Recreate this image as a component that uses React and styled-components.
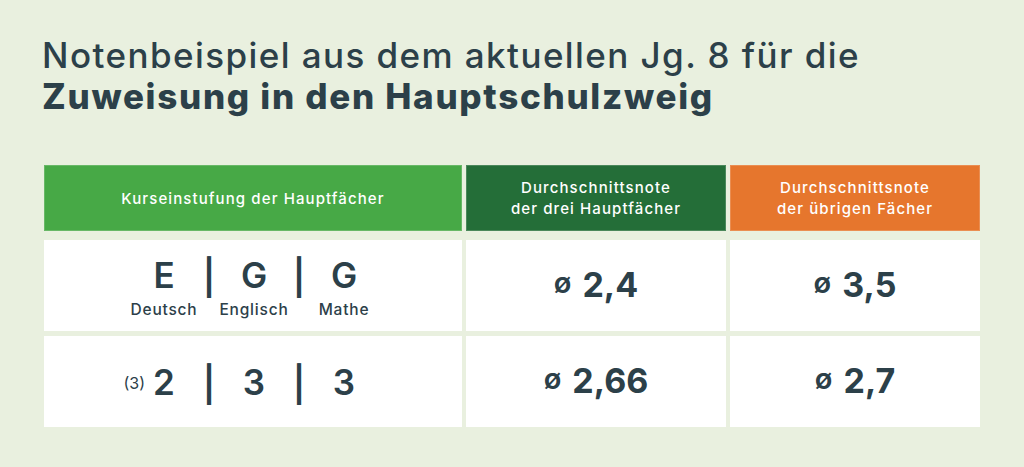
import React from "react";
import styled, { createGlobalStyle } from "styled-components";

const GlobalStyle = createGlobalStyle`
  html, body {
    margin: 0;
    padding: 0;
    background: #e9f0df;
  }
  body {
    font-family: "Inter", "Open Sans", sans-serif;
    color: #2c4049;
  }
`;

const Page = styled.div`
  width: 1024px;
  height: 467px;
  box-sizing: border-box;
  padding: 35px 44px 0 42px;
  background: #e9f0df;
  overflow: hidden;
`;

const Title = styled.h1`
  margin: 0;
  font-size: 35px;
  line-height: 41px;
  font-weight: 500;
  letter-spacing: 1.42px;
  color: #2c4049;

  strong {
    display: block;
    font-weight: 800;
    letter-spacing: 1.7px;
  }
`;

const Table = styled.div`
  margin: 48px 0 0 2px;
  display: flex;
  flex-direction: column;
  gap: 5px;
`;

const Row = styled.div`
  display: grid;
  grid-template-columns: 418px 260px 250px;
  column-gap: 4px;
  height: ${(p) => p.$h}px;
  margin-bottom: ${(p) => (p.$head ? 4 : 0)}px;
`;

const HeadCell = styled.div`
  background: ${(p) => p.$bg};
  color: #fff;
  display: flex;
  align-items: center;
  justify-content: center;
  text-align: center;
  font-size: 15px;
  line-height: 21px;
  font-weight: 500;
  letter-spacing: 1.1px;
  box-shadow: inset 0 0 0 1px rgba(255, 255, 255, 0.18);
`;

const Cell = styled.div`
  background: #fff;
  display: flex;
  align-items: center;
  justify-content: center;
`;

const Grades = styled.div`
  display: grid;
  grid-template-columns: 86px 4px 86px 4px 86px;
  align-items: start;
  margin: ${(p) => (p.$labelled ? "5px 0 0 2px" : "0 0 0 2px")};
`;

const Subject = styled.div`
  display: flex;
  flex-direction: column;
  align-items: center;
`;

const Letter = styled.span`
  position: relative;
  font-size: 35px;
  line-height: 36px;
  font-weight: 600;
`;

const Pipe = styled.span`
  font-size: 35px;
  line-height: 36px;
  font-weight: 600;
  display: flex;
  justify-content: center;
  transform: translateY(2px);
`;

const Label = styled.span`
  font-size: 15.5px;
  line-height: 20px;
  font-weight: 500;
  letter-spacing: 0.8px;
  margin-top: 7px;
`;

const Note = styled.sup`
  position: absolute;
  right: calc(100% + 8px);
  top: 11px;
  font-size: 16px;
  line-height: 16px;
  font-weight: 400;
  vertical-align: baseline;
`;

const Avg = styled.div`
  display: flex;
  align-items: baseline;
  gap: 11px;
  font-size: 34px;
  font-weight: 700;
  line-height: 40px;

  span {
    position: relative;
    top: -4px;
    font-size: 29px;
    font-weight: 600;
  }
`;

const rows = [
  {
    grades: ["E", "G", "G"],
    labels: ["Deutsch", "Englisch", "Mathe"],
    main: "2,4",
    rest: "3,5",
  },
  {
    grades: ["2", "3", "3"],
    note: "(3)",
    main: "2,66",
    rest: "2,7",
  },
];

export default function App() {
  return (
    <Page>
      <GlobalStyle />
      <Title>
        Notenbeispiel aus dem aktuellen Jg. 8 für die
        <strong>Zuweisung in den Hauptschulzweig</strong>
      </Title>

      <Table>
        <Row $h={66} $head>
          <HeadCell $bg="#47a946">Kurseinstufung der Hauptfächer</HeadCell>
          <HeadCell $bg="#246e38">
            Durchschnittsnote
            <br />
            der drei Hauptfächer
          </HeadCell>
          <HeadCell $bg="#e6762d">
            Durchschnittsnote
            <br />
            der übrigen Fächer
          </HeadCell>
        </Row>

        {rows.map((r, i) => (
          <Row $h={91} key={i}>
            <Cell>
              <Grades $labelled={!!r.labels}>
                {r.grades.map((g, j) => (
                  <React.Fragment key={j}>
                    {j > 0 && <Pipe>|</Pipe>}
                    <Subject>
                      <Letter>
                        {j === 0 && r.note && <Note>{r.note}</Note>}
                        {g}
                      </Letter>
                      {r.labels && <Label>{r.labels[j]}</Label>}
                    </Subject>
                  </React.Fragment>
                ))}
              </Grades>
            </Cell>
            <Cell>
              <Avg>
                <span>ø</span>
                {r.main}
              </Avg>
            </Cell>
            <Cell>
              <Avg>
                <span>ø</span>
                {r.rest}
              </Avg>
            </Cell>
          </Row>
        ))}
      </Table>
    </Page>
  );
}
